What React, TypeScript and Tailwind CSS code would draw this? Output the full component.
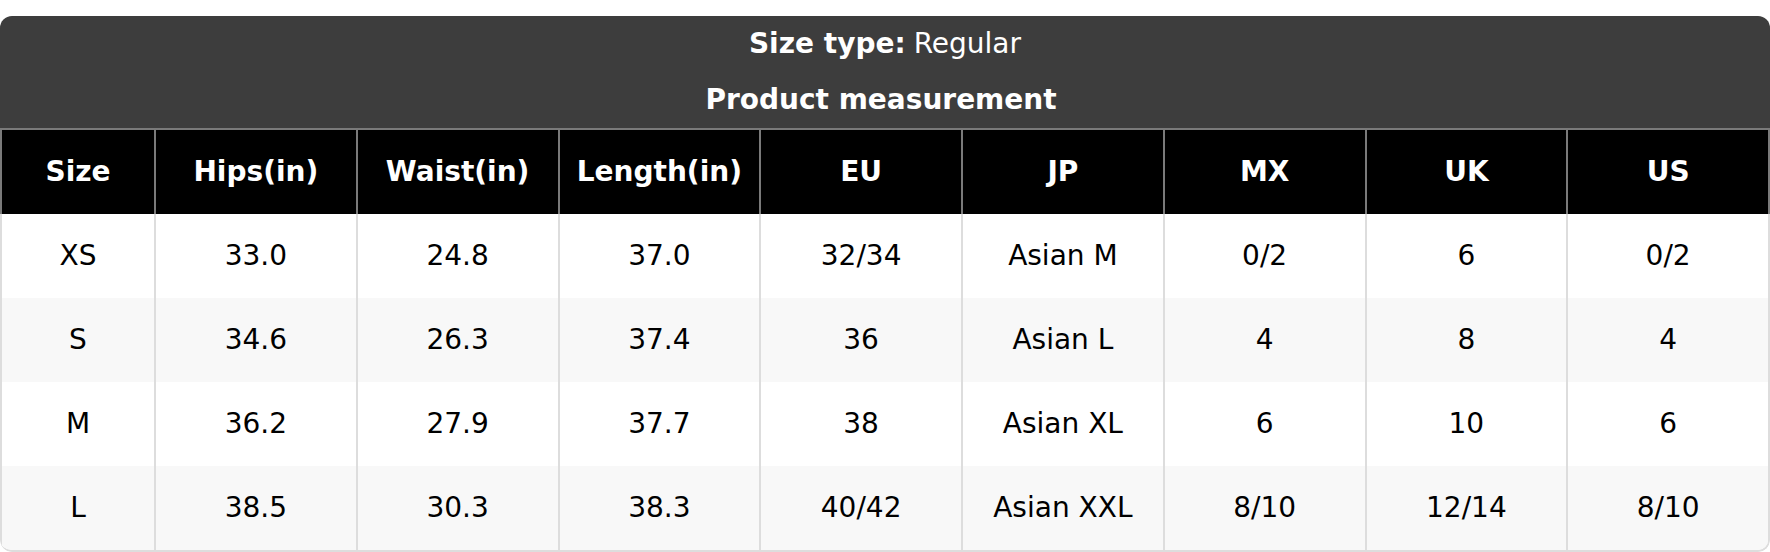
import React from "react";

const headers = ["Size", "Hips(in)", "Waist(in)", "Length(in)", "EU", "JP", "MX", "UK", "US"];
const rows = [
  ["XS", "33.0", "24.8", "37.0", "32/34", "Asian M", "0/2", "6", "0/2"],
  ["S", "34.6", "26.3", "37.4", "36", "Asian L", "4", "8", "4"],
  ["M", "36.2", "27.9", "37.7", "38", "Asian XL", "6", "10", "6"],
  ["L", "38.5", "30.3", "38.3", "40/42", "Asian XXL", "8/10", "12/14", "8/10"],
];

export default function App() {
  return (
    <div className="w-[1770px] h-[552px] bg-white pt-[16px]" style={{ fontFamily: '"DejaVu Sans", sans-serif' }}>
      <div className="w-[1770px] rounded-[12px] overflow-hidden">
        <div className="bg-[#3d3d3d] text-white text-[28px] h-[112px] flex flex-col">
          <div className="h-[56px] flex items-center justify-center">
            <span className="font-bold">Size type:</span>
            <span className="ml-[8px]">Regular</span>
          </div>
          <div className="h-[56px] flex items-center justify-center font-bold pr-[8px]">Product measurement</div>
        </div>
        <div className="grid grid-cols-[154px_repeat(8,minmax(0,1fr))] h-[86px] bg-black border-t-2 border-r-2 border-[#7a7a7a]">
          {headers.map((h) => (
            <div
              key={h}
              className="flex items-center justify-center border-l-2 border-[#7a7a7a] text-white font-bold text-[28px]"
            >
              {h}
            </div>
          ))}
        </div>
        <div className="border-b-2 border-r-2 border-[#dddddd] rounded-b-[12px] overflow-hidden">
          {rows.map((r, ri) => (
            <div
              key={ri}
              className={
                "grid grid-cols-[154px_repeat(8,minmax(0,1fr))] h-[84px] " +
                (ri % 2 === 1 ? "bg-[#f8f8f8]" : "bg-white")
              }
            >
              {r.map((c, ci) => (
                <div
                  key={ci}
                  className="flex items-center justify-center border-l-2 border-[#dddddd] text-black text-[28px]"
                >
                  {c}
                </div>
              ))}
            </div>
          ))}
        </div>
      </div>
    </div>
  );
}
